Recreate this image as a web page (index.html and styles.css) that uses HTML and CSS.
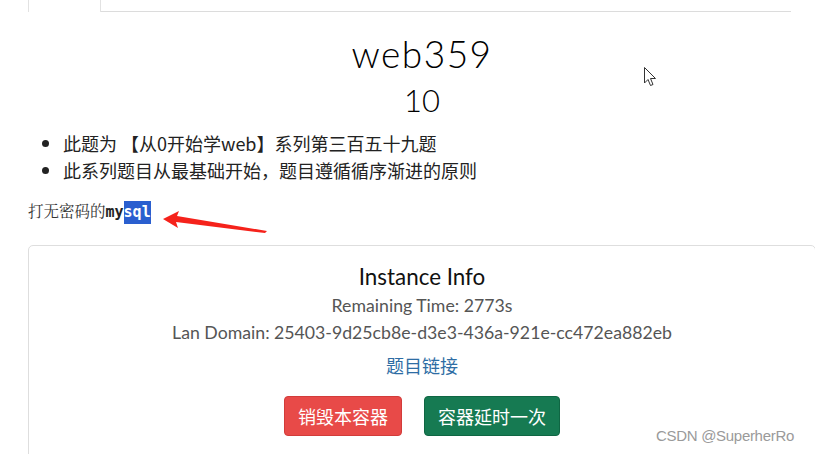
FILE: index.html
```html
<!DOCTYPE html>
<html>
<head>
<meta charset="utf-8">
<link rel="stylesheet" href="styles.css">
</head>
<body>
<div class="page">
  <div class="tabs">
    <div class="tab active"></div>
    <div class="tab-rest"></div>
  </div>
  <h1 class="title">web359</h1>
  <h2 class="score">10</h2>
  <ul class="desc">
    <li>此题为 【从0开始学web】系列第三百五十九题</li>
    <li>此系列题目从最基础开始，题目遵循循序渐进的原则</li>
  </ul>
  <p class="hint">打无密码的<code>my<span class="sel">sql</span></code></p>
  <div class="card">
    <div class="card-title">Instance Info</div>
    <div class="info">Remaining Time: 2773s</div>
    <div class="info">Lan Domain: 25403-9d25cb8e-d3e3-436a-921e-cc472ea882eb</div>
    <a class="link" href="#">题目链接</a>
    <div class="actions">
      <button class="btn btn-red">销毁本容器</button>
      <button class="btn btn-green">容器延时一次</button>
    </div>
  </div>
</div>
<svg class="arrow" width="120" height="30" viewBox="0 0 120 30">
  <path d="M2 14 L18 6 L16 11 L106 26 L104 28 L15 17 L17 23 Z" fill="#f5221b"/>
</svg>
<svg class="cursor" width="16" height="22" viewBox="0 0 16 22">
  <path d="M1.5 1.5 L1.5 17 L5 13.5 L7.5 19.5 L10 18.5 L7.5 12.5 L12.5 12.5 Z" fill="#fff" stroke="#333" stroke-width="1" stroke-linejoin="round"/>
</svg>
<div class="watermark">CSDN @SuperherRo</div>
</body>
</html>
```
FILE: styles.css
```css
html, body {
  margin: 0;
  padding: 0;
  background: #fff;
}
body {
  width: 815px;
  height: 454px;
  overflow: hidden;
  position: relative;
  font-family: Lato, "Noto Sans CJK SC", sans-serif;
  color: #222;
}
.page {
  padding-left: 28px;
  width: 788px;
}
.tabs {
  display: flex;
  height: 12px;
}
.tab.active {
  width: 71px;
  border-left: 1px solid #e2e2e2;
  border-right: 1px solid #e2e2e2;
}
.tab-rest {
  width: 690px;
  border-bottom: 1px solid #dcdcdc;
}
.title {
  margin: 20px 0 0;
  text-align: center;
  font-family: Lato, sans-serif;
  font-weight: 300;
  font-size: 37px;
  line-height: 44px;
  letter-spacing: 1.5px;
  color: #000;
}
.score {
  margin: 4px 0 0;
  text-align: center;
  font-family: Lato, sans-serif;
  font-weight: 300;
  font-size: 31px;
  line-height: 40px;
  color: #000;
}
.desc {
  margin: 10px 0 0;
  padding-left: 35px;
  font-family: "Noto Sans CJK SC", sans-serif;
  font-size: 18px;
  line-height: 27px;
  color: #222;
}
.hint {
  margin: 16px 0 0;
  font-family: "Noto Serif CJK SC", "Noto Sans CJK SC", serif;
  font-size: 15.5px;
  line-height: 20px;
  color: #333;
}
.hint code {
  font-family: "DejaVu Sans Mono", monospace;
  font-size: 15px;
  font-weight: 600;
  color: #222;
}
.sel {
  background: #2a5fcf;
  color: #fff;
  padding: 2px 0 3px;
}
.card {
  margin-top: 23px;
  border: 1px solid #dedede;
  border-radius: 5px;
  height: 240px;
  box-sizing: border-box;
  display: flex;
  flex-direction: column;
  align-items: center;
  padding-top: 16px;
}
.card-title {
  font-size: 22.4px;
  font-weight: 400;
  line-height: 30px;
  color: #111;
}
.info {
  font-size: 17.7px;
  line-height: 27px;
  color: #555;
}
.link {
  margin-top: 4px;
  font-family: "Noto Sans CJK SC", sans-serif;
  font-size: 18px;
  line-height: 30px;
  color: #2e6da4;
  text-decoration: none;
}
.actions {
  display: flex;
  gap: 22px;
  margin-top: 16px;
}
.btn {
  height: 40px;
  padding: 0 13px;
  border-radius: 4px;
  font-family: "Noto Sans CJK SC", sans-serif;
  font-size: 18px;
  color: #fff;
}
.btn-red {
  background: #e84a48;
  border: 1px solid #d23c3a;
}
.btn-green {
  background: #167a52;
  border: 1px solid #0f6643;
}
.arrow {
  position: absolute;
  left: 161px;
  top: 205px;
}
.cursor {
  position: absolute;
  left: 643px;
  top: 66px;
}
.watermark {
  position: absolute;
  left: 656px;
  top: 427px;
  font-family: "Liberation Sans", Arial, sans-serif;
  font-size: 15px;
  color: #9a9a9a;
  letter-spacing: -0.3px;
}
```
